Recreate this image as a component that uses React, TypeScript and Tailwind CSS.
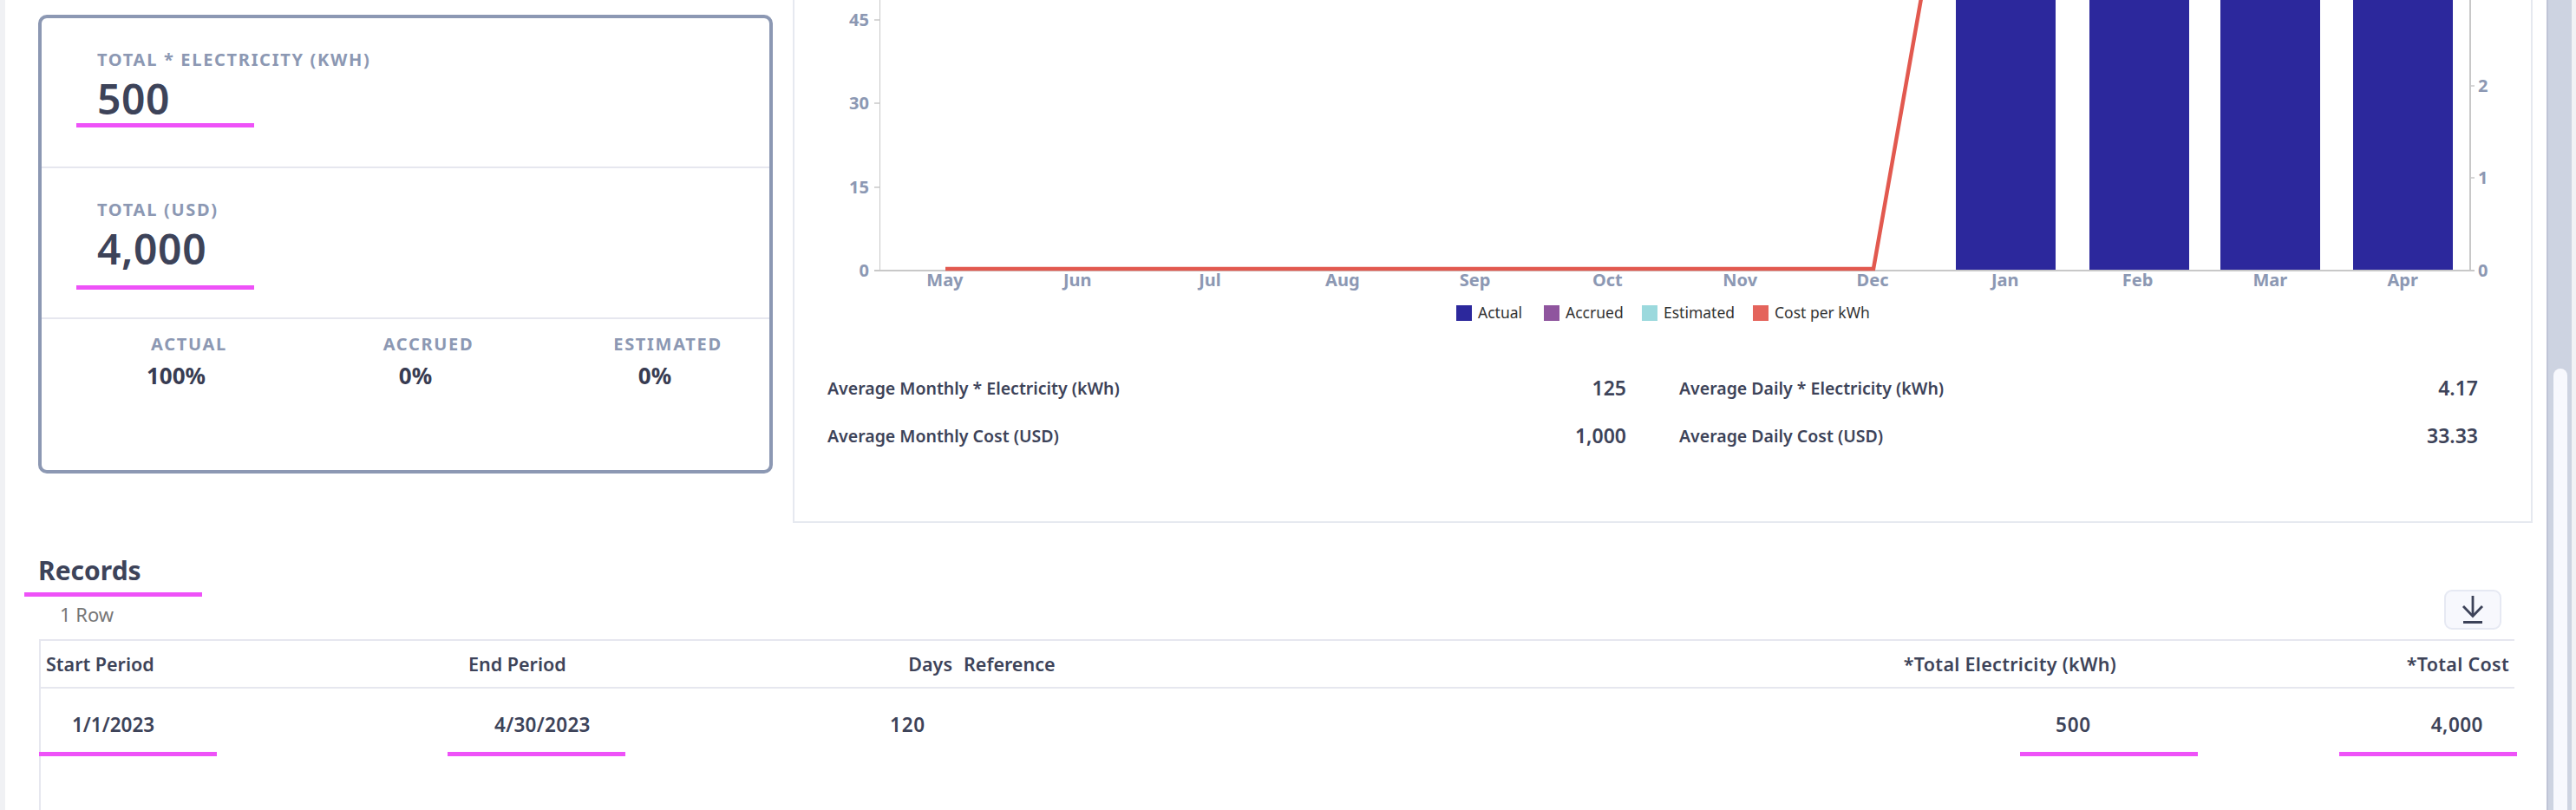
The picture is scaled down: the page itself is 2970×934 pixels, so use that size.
import React from "react";

const cols = "grid grid-cols-[485px_468px_103px_845px_500px_451px]";

function Mark({ className }: { className: string }) {
  return <div className={`absolute h-[5px] w-[205px] bg-[#ee52f8] ${className}`} />;
}

function Chart() {
  const months = ["May", "Jun", "Jul", "Aug", "Sep", "Oct", "Nov", "Dec", "Jan", "Feb", "Mar", "Apr"];
  const bars = [2255, 2409, 2560, 2713];
  const left = [
    ["45", 23],
    ["30", 119],
    ["15", 216],
    ["0", 312],
  ] as const;
  const right = [
    ["2", 99],
    ["1", 205],
    ["0", 312],
  ] as const;
  const legend = [
    [1679, "#2c289c", "Actual"],
    [1780, "#8f559e", "Accrued"],
    [1893, "#9bd9dd", "Estimated"],
    [2021, "#e4645c", "Cost per kWh"],
  ] as const;
  return (
    <svg width="2002" height="420" viewBox="916 0 2002 420" className="block">
      {bars.map((x) => (
        <rect key={x} x={x} y="0" width="115" height="312" fill="#2c289c" />
      ))}
      <line x1="1014.5" y1="0" x2="1014.5" y2="312" stroke="#c8c8c8" strokeWidth="1" />
      <line x1="2848" y1="0" x2="2848" y2="312" stroke="#c8c8c8" strokeWidth="2" />
      <line x1="1008" y1="312" x2="2853" y2="312" stroke="#c8c8c8" strokeWidth="2" />
      {left.map(([t, y]) => (
        <g key={t}>
          <line x1="1008" y1={y} x2="1014" y2={y} stroke="#c8c8c8" strokeWidth="1.5" />
          <text x="1002" y={y + 7} textAnchor="end" fontSize="20" fontWeight="700" fill="#8c98b3">
            {t}
          </text>
        </g>
      ))}
      {right.map(([t, y]) => (
        <g key={t}>
          <line x1="2848" y1={y} x2="2853" y2={y} stroke="#c8c8c8" strokeWidth="1.5" />
          <text x="2857" y={y + 7} fontSize="20" fontWeight="700" fill="#8c98b3">
            {t}
          </text>
        </g>
      ))}
      {months.map((m, i) => (
        <text key={m} x={1014 + 152.8 * (i + 0.5) - 1} y="330" textAnchor="middle" fontSize="20" fontWeight="700" fill="#8c98b3">
          {m}
        </text>
      ))}
      <polyline points="1090,310 2160,310 2215,-2" fill="none" stroke="#e2594f" strokeWidth="4.5" />
      {legend.map(([x, c, t]) => (
        <g key={t}>
          <rect x={x} y="352" width="18" height="18" fill={c} />
          <text x={x + 25} y="367" fontSize="17.5" fill="#333333">
            {t}
          </text>
        </g>
      ))}
    </svg>
  );
}

function Stat({ label, value }: { label: string; value: string }) {
  return (
    <div className="flex h-[55px] items-center justify-between">
      <span className="text-[19.5px] font-semibold text-[#3d4359]">{label}</span>
      <span className="text-[23px] font-semibold text-[#3d4359]">{value}</span>
    </div>
  );
}

export default function App() {
  return (
    <div className="flex h-[934px] w-[2970px] overflow-hidden bg-white font-['Noto_Sans',sans-serif] text-[#3d4359]">
      <div className="w-[6px] shrink-0 bg-[#f0f1f4]" />
      <main className="w-[2930px] shrink-0">
        <div className="flex h-[603px] items-start">
          <section className="ml-[38px] mt-[17px] h-[529px] w-[847px] shrink-0 rounded-[10px] border-4 border-[#8c98b3]">
            <div className="relative h-[173px] border-b-2 border-[#e6e7ef] pl-[64px] pt-[36px]">
              <div className="h-[24px] text-[20px] font-bold leading-[24px] tracking-[1.7px] text-[#8c98b3]">TOTAL * ELECTRICITY (KWH)</div>
              <div className="mt-[5px] h-[56px] text-[48px] font-semibold leading-[56px] tracking-[0.6px]">500</div>
              <Mark className="left-[40px] top-[121px]" />
            </div>
            <div className="relative h-[174px] border-b-2 border-[#e6e7ef] pl-[64px] pt-[36px]">
              <div className="h-[24px] text-[20px] font-bold leading-[24px] tracking-[1.7px] text-[#8c98b3]">TOTAL (USD)</div>
              <div className="mt-[5px] h-[56px] text-[48px] font-semibold leading-[56px] tracking-[0.6px]">4,000</div>
              <Mark className="left-[40px] top-[135px]" />
            </div>
            <div className="grid grid-cols-[276px_276px_276px] pl-[17px] pt-[17px] text-center">
              {[
                ["ACTUAL", "100%"],
                ["ACCRUED", "0%"],
                ["ESTIMATED", "0%"],
              ].map(([l, v]) => (
                <div key={l}>
                  <div className="h-[24px] pl-[30px] text-[20px] font-bold leading-[24px] tracking-[1.7px] text-[#8c98b3]">{l}</div>
                  <div className="mt-[8px] h-[32px] text-[26px] font-bold leading-[32px] text-[#383c52]">{v}</div>
                </div>
              ))}
            </div>
          </section>
          <section className="ml-[23px] h-[603px] w-[2006px] shrink-0 border-x-2 border-b-2 border-[#e6e9f0]">
            <Chart />
            <div className="ml-[38px] grid w-[1903px] grid-cols-[921px_921px] gap-x-[61px]">
              <Stat label="Average Monthly * Electricity (kWh)" value="125" />
              <Stat label="Average Daily * Electricity (kWh)" value="4.17" />
              <Stat label="Average Monthly Cost (USD)" value="1,000" />
              <Stat label="Average Daily Cost (USD)" value="33.33" />
            </div>
          </section>
        </div>

        <section className="relative h-[134px] pt-[36px]">
          <h2 className="ml-[38px] h-[38px] text-[30px] font-bold leading-[38px]">Records</h2>
          <Mark className="left-[22px] top-[80px]" />
          <div className="ml-[63px] mt-[18px] text-[22px] leading-[26px] text-[#777777]">1 Row</div>
          <button className="absolute left-[2812px] top-[77px] flex h-[46px] w-[66px] items-center justify-center rounded-[9px] border-2 border-[#e6e9f3] bg-[#f7f8fd]">
            <svg width="26" height="34" viewBox="0 0 26 34" fill="none" stroke="#3d4359" strokeWidth="2.8">
              <path d="M13 1V24" />
              <path d="M2 13L13 24.5L24 13" />
              <path d="M2 31.5H24" strokeWidth="3" />
            </svg>
          </button>
        </section>

        <section className="ml-[39px] h-[197px] w-[2854px] border-l-2 border-[#e6e7ef] font-semibold">
          <div className={`${cols} h-[57px] items-center border-y-2 border-[#e6e7ef] pt-[1px] text-[21.5px]`}>
            <div className="pl-[6px]">Start Period</div>
            <div className="pl-[8px]">End Period</div>
            <div className="pr-[5px] text-right">Days</div>
            <div className="pl-[8px]">Reference</div>
            <div className="pr-[8px] text-right tracking-[0.3px]">*Total Electricity (kWh)</div>
            <div className="pr-[6px] text-right tracking-[0.3px]">*Total Cost</div>
          </div>
          <div className={`${cols} relative h-[85px] items-start pt-[27px] text-[22.5px] leading-[30px]`}>
            <div className="pl-[36px]">1/1/2023</div>
            <div className="pl-[38px] tracking-[0.3px]">4/30/2023</div>
            <div className="pr-[36px] text-right tracking-[0.8px]">120</div>
            <div />
            <div className="pr-[37px] text-right tracking-[0.8px]">500</div>
            <div className="pr-[36px] text-right tracking-[0.5px]">4,000</div>
            <Mark className="-left-[2px] top-[73px]" />
            <Mark className="left-[469px] top-[73px]" />
            <Mark className="left-[2282px] top-[73px]" />
            <Mark className="left-[2650px] top-[73px]" />
          </div>
        </section>
      </main>
      <aside className="flex w-[34px] shrink-0">
        <div className="h-full w-[29px] border-l-2 border-[#bfc4d6] bg-[#cdd3e1] pl-[6px] pt-[425px]">
          <div className="h-[509px] w-[16px] rounded-t-[8px] bg-[#f7f8fd]" />
        </div>
        <div className="h-full w-[5px] bg-[#f1f2f5]" />
      </aside>
    </div>
  );
}
